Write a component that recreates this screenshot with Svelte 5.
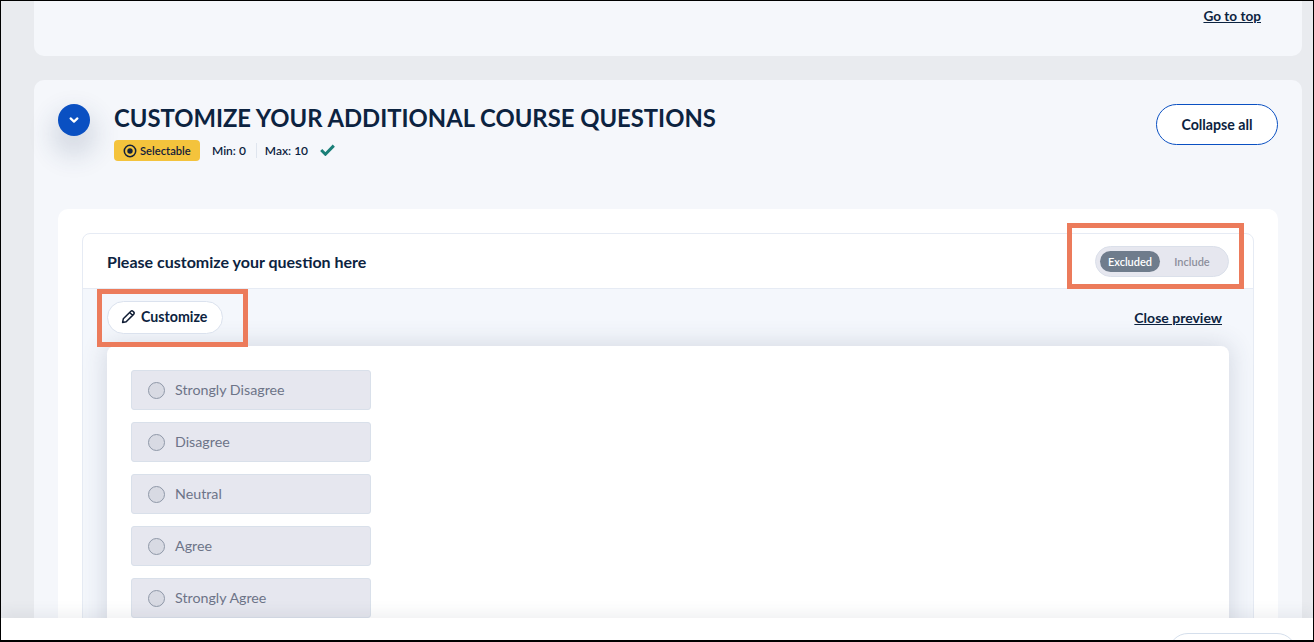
<script>
  const options = ["Strongly Disagree", "Disagree", "Neutral", "Agree", "Strongly Agree"];
</script>

<div class="page">
  <section class="card top-card">
    <a class="link" href="#top">Go to top</a>
  </section>

  <section class="card main-card">
    <div class="head">
      <button class="round" aria-label="Collapse">
        <svg width="12" height="12" viewBox="0 0 12 12"><path d="M2.6 4.4 6 7.6l3.4-3.2" fill="none" stroke="#fff" stroke-width="2.2" stroke-linecap="round" stroke-linejoin="round" /></svg>
      </button>
      <div class="titles">
        <h1>CUSTOMIZE YOUR ADDITIONAL COURSE QUESTIONS</h1>
        <div class="meta">
          <span class="badge">
            <svg width="14" height="14" viewBox="0 0 14 14"><circle cx="7" cy="7" r="5.7" fill="none" stroke="#13203a" stroke-width="1.5" /><circle cx="7" cy="7" r="2.7" fill="#13203a" /></svg>
            Selectable
          </span>
          <span class="min">Min: 0</span>
          <span class="max">Max: 10</span>
          <svg class="check" width="15" height="12" viewBox="0 0 15 12"><path d="M1.2 6 5.4 10.2 13.8 1.6" fill="none" stroke="#1a7f78" stroke-width="3" /></svg>
        </div>
      </div>
      <button class="collapse">Collapse all</button>
    </div>

    <div class="inner">
      <div class="box">
        <div class="box-head">
          <h2>Please customize your question here</h2>
          <div class="toggle">
            <span class="on">Excluded</span>
            <span class="off">Include</span>
          </div>
        </div>
        <div class="preview">
          <div class="tools">
            <button class="customize">
              <svg width="15" height="15" viewBox="0 0 15 15"><path d="M1.6 13.4l.7-3.6 7.6-7.6a1.4 1.4 0 0 1 2 0l.9.9a1.4 1.4 0 0 1 0 2l-7.6 7.6zM8.7 3.5l2.8 2.8" fill="none" stroke="#0f1c33" stroke-width="1.5" stroke-linejoin="round" /></svg>
              Customize
            </button>
            <a class="link" href="#close">Close preview</a>
          </div>
          <div class="panel">
            {#each options as option}
              <div class="option">
                <span class="radio"></span>
                {option}
              </div>
            {/each}
          </div>
        </div>
      </div>
    </div>
  </section>

  <div class="mark mark-toggle"></div>
  <div class="mark mark-customize"></div>

  <footer class="bottom">
    <span class="ghost"></span>
  </footer>
</div>

<style>
  :global(body) {
    margin: 0;
  }
  .page {
    position: relative;
    box-sizing: border-box;
    height: 642px;
    overflow: hidden;
    padding: 0 11px 0 33px;
    background: #e9ebef;
    border: solid #000;
    border-width: 1px 1px 2px 1px;
    font-family: Lato, "Liberation Sans", sans-serif;
    color: #0c2340;
  }
  .card {
    background: #f5f7fb;
    border-radius: 10px;
  }
  .top-card {
    box-sizing: border-box;
    height: 55px;
    border-radius: 0 0 10px 10px;
    padding: 4px 41px 0 0;
    text-align: right;
  }
  .link {
    font-size: 14px;
    font-weight: 700;
    line-height: 17px;
    color: #0c2340;
    text-decoration: underline;
  }
  .top-card .link {
    font-size: 13.6px;
  }
  .main-card {
    margin-top: 24px;
    padding: 24px 24px 0;
    height: 600px;
    box-sizing: border-box;
  }
  .head {
    display: flex;
    align-items: flex-start;
    height: 105px;
  }
  .round {
    flex: none;
    width: 32px;
    height: 32px;
    padding: 0;
    border: 0;
    border-radius: 50%;
    background: #0a50c2;
    display: flex;
    align-items: center;
    justify-content: center;
    box-shadow: 0 14px 26px 6px rgba(40, 60, 100, 0.16);
  }
  .titles {
    margin-left: 24px;
    flex: 1;
  }
  h1 {
    margin: -1px 0 0;
    font-size: 23.8px;
    line-height: 30px;
    font-weight: 700;
    color: #0c2340;
  }
  .meta {
    display: flex;
    align-items: center;
    margin-top: 7px;
    font-size: 12px;
    font-weight: 600;
  }
  .badge {
    display: flex;
    align-items: center;
    gap: 3px;
    box-sizing: border-box;
    width: 86px;
    height: 21px;
    padding-left: 9px;
    border-radius: 4px;
    background: #f4c33c;
    font-size: 11.2px;
    color: #13203a;
  }
  .min {
    margin-left: 12px;
    padding-right: 10px;
    border-right: 1px solid #dfe5ee;
    line-height: 15px;
  }
  .max {
    margin-left: 8px;
  }
  .check {
    margin-left: 12px;
    margin-top: -1px;
  }
  .collapse {
    flex: none;
    width: 122px;
    height: 41px;
    padding: 0;
    background: #fff;
    border: 1px solid #0a50c2;
    border-radius: 21px;
    font: 700 14.2px Lato, "Liberation Sans", sans-serif;
    color: #0c2340;
  }
  .inner {
    background: #fff;
    border-radius: 10px;
    padding: 24px 24px 0 24px;
    height: 480px;
  }
  .box {
    border: 1px solid #e6ebf4;
    border-radius: 8px;
    height: 460px;
  }
  .box-head {
    display: flex;
    align-items: center;
    justify-content: space-between;
    box-sizing: border-box;
    height: 55px;
    padding: 0 24px;
    border-bottom: 1px solid #e6ebf4;
  }
  h2 {
    margin: 1px 0 0;
    font-size: 16px;
    font-weight: 700;
    color: #0c2340;
  }
  .toggle {
    display: flex;
    align-items: center;
    box-sizing: border-box;
    width: 134px;
    height: 31px;
    padding: 0 4px;
    margin: 1px 0 0;
    background: #e6e7ef;
    border: 1px solid #dbe0ea;
    border-radius: 16px;
    font-size: 11px;
    font-weight: 600;
  }
  .on {
    width: 60px;
    height: 21px;
    line-height: 21px;
    text-align: center;
    color: #fff;
    background: #6f7c8c;
    border-radius: 11px;
  }
  .off {
    flex: 1;
    text-align: center;
    color: #8d8f9c;
  }
  .preview {
    background: #f4f7fc;
    padding: 0 24px;
    height: 400px;
  }
  .tools {
    display: flex;
    align-items: center;
    justify-content: space-between;
    height: 57px;
    padding-right: 7px;
  }
  .customize {
    display: flex;
    align-items: center;
    gap: 5px;
    box-sizing: border-box;
    width: 116px;
    height: 33px;
    padding: 0 0 2px 13px;
    background: #fff;
    border: 1px solid #dbe2ee;
    border-radius: 17px;
    font: 700 14.2px Lato, "Liberation Sans", sans-serif;
    color: #0c2340;
  }
  .panel {
    display: flex;
    flex-direction: column;
    gap: 12px;
    box-sizing: border-box;
    height: 330px;
    padding: 24px;
    background: #fff;
    border-radius: 8px;
    box-shadow: 0 0 24px 2px rgba(50, 65, 95, 0.16);
  }
  .option {
    display: flex;
    align-items: center;
    gap: 10px;
    box-sizing: border-box;
    flex: none;
    width: 240px;
    height: 40px;
    padding: 0 0 2px 16px;
    background: #e6e7ef;
    border: 1px solid #d9e0ea;
    border-radius: 3px;
    font-size: 14.25px;
    color: #6d7488;
  }
  .radio {
    box-sizing: border-box;
    width: 17px;
    height: 17px;
    margin-top: 2px;
    background: #d8dae3;
    border: 1px solid #8f98a8;
    border-radius: 50%;
  }
  .mark {
    position: absolute;
    box-sizing: border-box;
    border: 5px solid #ec7b5b;
  }
  .mark-toggle {
    left: 1066px;
    top: 222px;
    width: 177px;
    height: 66px;
  }
  .mark-customize {
    left: 96px;
    top: 288px;
    width: 151px;
    height: 58px;
  }
  .bottom {
    position: absolute;
    left: 0;
    right: 0;
    bottom: 0;
    height: 22px;
    background: #fff;
    box-shadow: 0 -6px 14px rgba(60, 70, 90, 0.07);
    overflow: hidden;
  }
  .ghost {
    position: absolute;
    top: 15px;
    left: 1167px;
    width: 127px;
    height: 40px;
    border: 1px solid #d5dfec;
    border-radius: 20px;
  }
</style>
